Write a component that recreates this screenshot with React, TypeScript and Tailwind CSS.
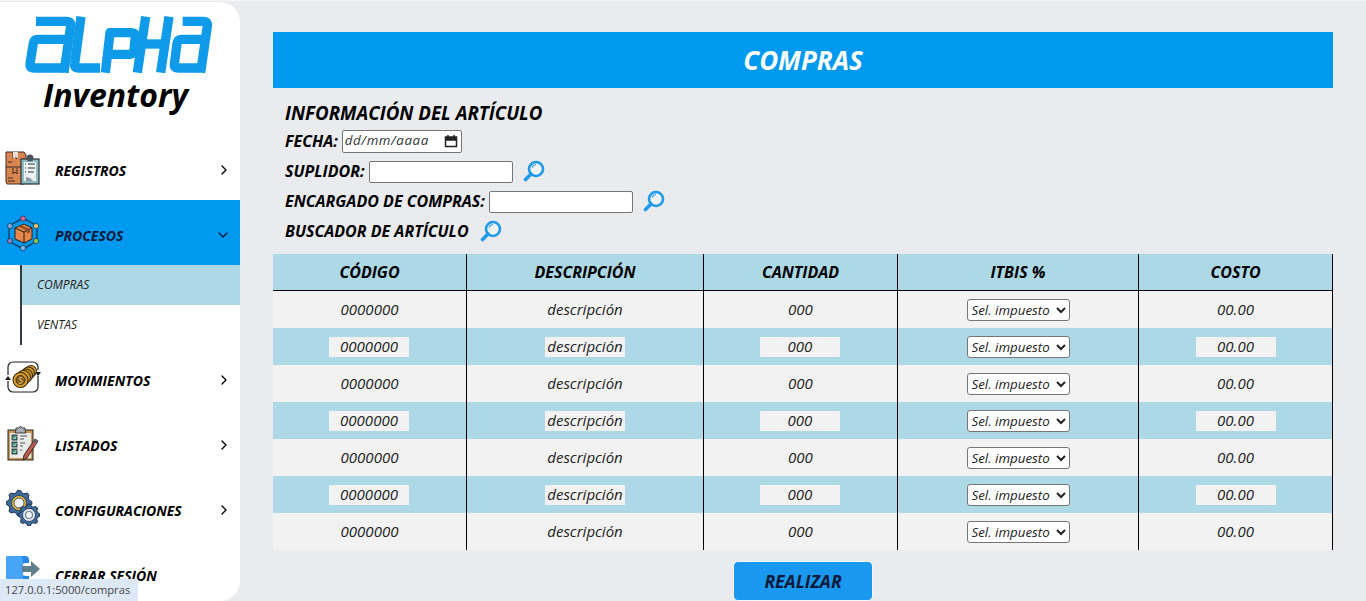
import React from "react";
import { ChevronDown, ChevronRight } from "lucide-react";

const BoxesIcon = () => (
  <svg width="36" height="36" viewBox="0 0 36 36">
    <path d="M1 2h18l2 3v28l-2 1H2l-1-2z" fill="#d98650" stroke="#3d2a20" strokeWidth="1" />
    <path d="M1 17h20M8 2v7l2-2 2 2V2M8 18v6l2-2 2 2v-6" fill="none" stroke="#3d2a20" strokeWidth="1" />
    <path d="M8 2h5v7l-2-2-3 2z" fill="#eadfd2" />
    <path d="M3 28h5M3 31h7M3 12h4" stroke="#3d2a20" strokeWidth="1" />
    <rect x="16" y="9" width="18" height="25" fill="#8fbcc4" stroke="#263238" strokeWidth="1.2" />
    <rect x="19" y="12" width="12" height="19" fill="#eef1f2" />
    <circle cx="25" cy="8" r="3.5" fill="#4a5560" />
    <path d="M20 14h1M23 14h7M20 18h1M23 18h7M20 22h1M23 22h6" stroke="#263238" strokeWidth="1.2" />
    <path d="M21 27l4 1 3 3h-7z" fill="#8b9aa3" />
  </svg>
);

const NetworkBoxIcon = () => (
  <svg width="34" height="36" viewBox="0 0 34 36">
    <path d="M17 3l14 8v15l-14 8-14-8V11z" fill="none" stroke="#13314d" strokeWidth="1.2" />
    <circle cx="17" cy="3.5" r="2.6" fill="#e4619b" stroke="#13314d" strokeWidth=".7" />
    <circle cx="30" cy="11" r="2.6" fill="#ecc06a" stroke="#13314d" strokeWidth=".7" />
    <circle cx="30" cy="26" r="2.6" fill="#8fc35a" stroke="#13314d" strokeWidth=".7" />
    <circle cx="17" cy="33" r="2.6" fill="#7fb7e6" stroke="#13314d" strokeWidth=".7" />
    <circle cx="4" cy="26" r="2.6" fill="#8a7fc0" stroke="#13314d" strokeWidth=".7" />
    <circle cx="4" cy="11" r="2.6" fill="#7fa6d6" stroke="#13314d" strokeWidth=".7" />
    <path d="M9 13l9-4 8 4v11l-8 4-9-4z" fill="#e5874a" stroke="#2a1c16" strokeWidth="1" />
    <path d="M9 13l9 4 8-4M18 17v11" fill="none" stroke="#2a1c16" strokeWidth="1" />
    <path d="M12 11.5l9 4v3l3-1.3v-3l-9-4z" fill="#8a4d2a" />
  </svg>
);

const CoinsIcon = () => (
  <svg width="36" height="34" viewBox="0 0 36 34">
    <path
      d="M3 14V6a5 5 0 0 1 5-5h20a5 5 0 0 1 5 5v3M33 15v11a5 5 0 0 1-5 5H8a5 5 0 0 1-5-5v-6"
      fill="none"
      stroke="#222"
      strokeWidth="1.2"
    />
    <path d="M0 19l3-4 3 4zM30 11h6l-3 4z" fill="#1a1a1a" />
    <g fill="#d9a02c" stroke="#3d2c10" strokeWidth="1.1">
      <circle cx="26" cy="10" r="5.5" />
      <circle cx="23.5" cy="12" r="6" />
      <circle cx="21" cy="14.5" r="6.5" />
      <circle cx="18.5" cy="16.5" r="7" />
      <circle cx="15.5" cy="19" r="7.5" />
    </g>
    <circle cx="15.5" cy="19" r="4.5" fill="#8a6224" stroke="#3d2c10" />
    <path d="M17.5 17c-2-1.5-4 0-2.5 1.5s3 1 2 3-3 1-3.5.5" fill="none" stroke="#f3cf6d" strokeWidth="1" />
  </svg>
);

const ChecklistIcon = () => (
  <svg width="32" height="36" viewBox="0 0 32 36">
    <rect x="1" y="5" width="25" height="30" fill="#c99a5b" stroke="#2b2118" strokeWidth="1" />
    <rect x="3" y="8" width="21" height="25" fill="#e8ebe8" />
    <path d="M9 5V3h3l1.5-2 1.5 2h3v2l1 3H8z" fill="#a5b0b5" stroke="#2b2118" strokeWidth=".8" />
    {[10, 17, 24].map((y) => (
      <React.Fragment key={y}>
        <rect x="5" y={y} width="5" height="5" fill="#3f8f7a" stroke="#1e2a2a" strokeWidth=".8" />
        <path d={`M6 ${y + 2.5}l1.5 1.5 2-3`} fill="none" stroke="#e8ebe8" strokeWidth=".8" />
      </React.Fragment>
    ))}
    <path d="M13 11h7M13 14h4M13 18h5M13 21h3M13 25h2" stroke="#555" strokeWidth="1.2" />
    <path d="M28 14l3 2-11 17-4 2 1-5z" fill="#bf5a52" stroke="#2b2118" strokeWidth=".9" />
    <path d="M28 14l3 2-1.5 2.5-3-2z" fill="#5c6670" />
  </svg>
);

const gearPath = (cx: number, cy: number, r: number, teeth: number) => {
  let d = "";
  for (let i = 0; i < teeth * 4; i++) {
    const a = (i / (teeth * 4)) * Math.PI * 2 - Math.PI / (teeth * 4);
    const rad = i % 4 < 2 ? r : r * 0.8;
    d += `${i ? "L" : "M"}${(cx + Math.cos(a) * rad).toFixed(1)} ${(cy + Math.sin(a) * rad).toFixed(1)}`;
  }
  return d + "Z";
};

const GearsIcon = () => (
  <svg width="34" height="36" viewBox="0 0 34 36">
    <path d={gearPath(13, 13, 13, 8)} fill="#3f6a9a" stroke="#1d3550" strokeWidth="1" />
    <circle cx="13" cy="13" r="7.5" fill="#e8b93f" stroke="#1d3550" strokeWidth=".8" />
    <circle cx="13" cy="13" r="5" fill="#f4f4f4" stroke="#1d3550" strokeWidth=".8" />
    <path d={gearPath(23, 25, 11, 8)} fill="#3f6a9a" stroke="#1d3550" strokeWidth="1" />
    <circle cx="23" cy="25" r="6.5" fill="#e6eaee" stroke="#1d3550" strokeWidth=".8" />
    <circle cx="23" cy="25" r="3.5" fill="#f8f8f8" stroke="#64809c" strokeWidth="1.2" />
  </svg>
);

const LogoutIcon = () => (
  <svg width="36" height="36" viewBox="0 0 36 36">
    <path d="M1 3a2 2 0 0 1 2-2h17a4 4 0 0 1 4 4v3h-3a6 6 0 0 0 0 13h3v12H1z" fill="#2488ea" />
    <path d="M1 3a2 2 0 0 1 2-2h13l2 3v29H1z" fill="#48a4f6" />
    <path d="M17 11h9V6l9 8-9 8v-5h-9z" fill="#607d8b" />
  </svg>
);

const MagnifierIcon = () => (
  <svg width="22" height="22" viewBox="0 0 22 22" className="shrink-0">
    <circle cx="13" cy="9" r="7" fill="#fff" fillOpacity=".35" stroke="#1f9ae8" strokeWidth="2.6" />
    <path d="M2.500 19.500L8 14" stroke="#1f9ae8" strokeWidth="3.6" strokeLinecap="round" />
    <path d="M9 7.500a5 5 0 0 1 4-3" fill="none" stroke="#1f9ae8" strokeWidth="1.2" />
  </svg>
);

// logotipo dibujado, no es texto de la pagina
const AlphaLogo = () => (
  <svg width="240" height="80" viewBox="0 6 720 240" role="img" aria-label="Alpha">
    <g fill="none" stroke="#0f9bea" strokeWidth="28" strokeLinejoin="round">
      <path d="M108 64H200Q214 64 212 78L192 218" />
      <path d="M195 118H112Q102 118 100 130L90 192Q88 204 100 204H192" />
      <path d="M243 50L224 192Q222 204 234 204H300" />
      <path d="M316 218L330 98H395Q408 98 406 110L402 150Q400 163 388 163H322" />
      <path d="M437 50L412 218" />
      <path d="M507 50L482 218" />
      <path d="M420 132H495" />
      <path d="M548 64H610Q624 64 622 78L602 218" />
      <path d="M605 118H545Q533 118 531 130L523 192Q521 204 533 204H602" />
    </g>
  </svg>
);

const menuItems = [
  { label: "REGISTROS", icon: <BoxesIcon /> },
  { label: "PROCESOS", icon: <NetworkBoxIcon />, open: true },
  { label: "MOVIMIENTOS", icon: <CoinsIcon /> },
  { label: "LISTADOS", icon: <ChecklistIcon /> },
  { label: "CONFIGURACIONES", icon: <GearsIcon /> },
  { label: "CERRAR SESIÓN", icon: <LogoutIcon />, noArrow: true },
];

const Sidebar = () => (
  <aside className="mt-[1px] h-[599px] w-[240px] shrink-0 rounded-r-[20px] bg-white">
    <div className="h-[133px]">
      <AlphaLogo />
      <p className="-mt-[5px] pl-[43px] text-[32px] leading-[36px] font-bold text-black">Inventory</p>
    </div>
    {menuItems.map((item) => (
      <div key={item.label}>
        <div className={`flex h-[65px] items-center pl-[4px] ${item.open ? "bg-[#0099f0]" : ""}`}>
          <span className="flex w-[38px] justify-center">{item.icon}</span>
          <span className={`ml-[13px] flex-1 pt-[5px] text-[14px] font-bold ${item.open ? "text-[#0a1a3a]" : "text-black"}`}>
            {item.label}
          </span>
          {!item.noArrow &&
            (item.open ? (
              <ChevronDown size={16} className="mt-[5px] mr-[9px] text-[#0a1a3a]" />
            ) : (
              <ChevronRight size={16} className="mt-[5px] mr-[8px] text-black" />
            ))}
        </div>
        {item.open && (
          <div className="ml-[20px] border-l-2 border-[#333a45] text-[12px] text-[#222]">
            <div className="flex h-[40px] items-center bg-[#add8e6] pl-[15px]">COMPRAS</div>
            <div className="flex h-[40px] items-center pl-[15px]">VENTAS</div>
          </div>
        )}
      </div>
    ))}
  </aside>
);

const columns = [
  { title: "CÓDIGO", value: "0000000", width: "w-[194px]", cell: "pr-px" },
  { title: "DESCRIPCIÓN", value: "descripción", width: "w-[237px]", cell: "" },
  { title: "CANTIDAD", value: "000", width: "w-[194px]", cell: "pr-px" },
  { title: "ITBIS %", value: "select", width: "w-[241px]", cell: "" },
  { title: "COSTO", value: "00.00", width: "w-[194px]", cell: "" },
];

const rows = [0, 1, 2, 3, 4, 5, 6];

const TaxSelect = () => (
  <select className="h-[22px] w-[103px] rounded-[3px] border border-[#767676] bg-white text-[13.333px] leading-none text-[#222] align-middle">
    <option>Sel. impuesto</option>
  </select>
);

const ComprasTable = () => (
  <table className="mt-2 w-[1060px] table-fixed border-separate border-spacing-0 text-[15px]">
    <thead>
      <tr className="h-[37px] bg-[#add8e6]">
        {columns.map((col) => (
          <th key={col.title} className={`${col.width} border-r border-b border-black p-0 text-[16px] font-bold text-black`}>
            {col.title}
          </th>
        ))}
      </tr>
    </thead>
    <tbody>
      {rows.map((row) => {
        const striped = row % 2 === 1;
        return (
          <tr key={row} className={`h-[37px] ${striped ? "bg-[#add8e6]" : "bg-[#f2f2f2]"}`}>
            {columns.map((col) => (
              <td key={col.title} className={`border-r border-black p-0 text-center text-[#222] ${striped ? col.cell : ""}`}>
                {col.value === "select" ? (
                  <TaxSelect />
                ) : striped ? (
                  <div className="mx-auto h-[20px] w-[80px] bg-[#f2f2f2] leading-[19px]">{col.value}</div>
                ) : (
                  col.value
                )}
              </td>
            ))}
          </tr>
        );
      })}
    </tbody>
  </table>
);

const FormLabel = ({ children }: { children: React.ReactNode }) => (
  <span className="mr-[4px] text-[16px] font-bold whitespace-nowrap text-black">{children}</span>
);

const SearchInput = () => (
  <input className="mt-[2px] h-[22px] w-[144px] rounded-[2px] border border-[#767676] bg-white" />
);

const ArticleForm = () => (
  <div className="pl-3">
    <h2 className="mt-[12px] h-[26px] text-[18.72px] leading-[26px] font-bold text-black">INFORMACIÓN DEL ARTÍCULO</h2>
    <div className="flex h-[30px] items-center">
      <FormLabel>FECHA:</FormLabel>
      <div className="flex h-[23px] w-[120px] items-center justify-between rounded-[2px] border border-[#767676] bg-white pr-[3px] pl-[2px] text-[13.333px] tracking-[0.6px] text-[#333]">
        dd/mm/aaaa
        <svg width="14" height="14" viewBox="0 0 14 14">
          <path d="M1.500 3h11v9.500h-11zM1.500 3v3h11V3M4 1v2M10 1v2" fill="none" stroke="#222" strokeWidth="1.5" />
          <rect x="1" y="3" width="12" height="3" fill="#222" />
        </svg>
      </div>
    </div>
    <div className="flex h-[30px] items-center">
      <FormLabel>SUPLIDOR:</FormLabel>
      <SearchInput />
      <span className="ml-[10px]"><MagnifierIcon /></span>
    </div>
    <div className="flex h-[30px] items-center">
      <FormLabel>ENCARGADO DE COMPRAS:</FormLabel>
      <SearchInput />
      <span className="ml-[10px]"><MagnifierIcon /></span>
    </div>
    <div className="flex h-[30px] items-center">
      <FormLabel>BUSCADOR DE ARTÍCULO</FormLabel>
      <span className="ml-[7px]"><MagnifierIcon /></span>
    </div>
  </div>
);

export default function App() {
  return (
    <div className="relative flex h-[601px] overflow-hidden border-t border-[#f4f4f6] bg-[#e9ebef] font-['Open_Sans',sans-serif] italic">
      <Sidebar />
      <main className="ml-[33px] w-[1060px] pt-[31px]">
        <h1 className="flex h-[56px] items-center justify-center bg-[#0099f0] text-[26px] font-bold text-white">
          COMPRAS
        </h1>
        <ArticleForm />
        <ComprasTable />
        <div className="mt-[11px] flex justify-center">
          <button className="h-[40px] w-[140px] rounded-[5px] border border-[#f4f8fb] bg-[#1a98ef] text-[17.6px] font-bold text-[#0a1a3a]">
            REALIZAR
          </button>
        </div>
      </main>
      <div className="absolute bottom-0 left-0 flex h-[22px] w-[138px] items-center bg-[#dee9f8] pl-[5px] text-[11.2px] text-[#444] not-italic">
        127.0.0.1:5000/compras
      </div>
    </div>
  );
}
